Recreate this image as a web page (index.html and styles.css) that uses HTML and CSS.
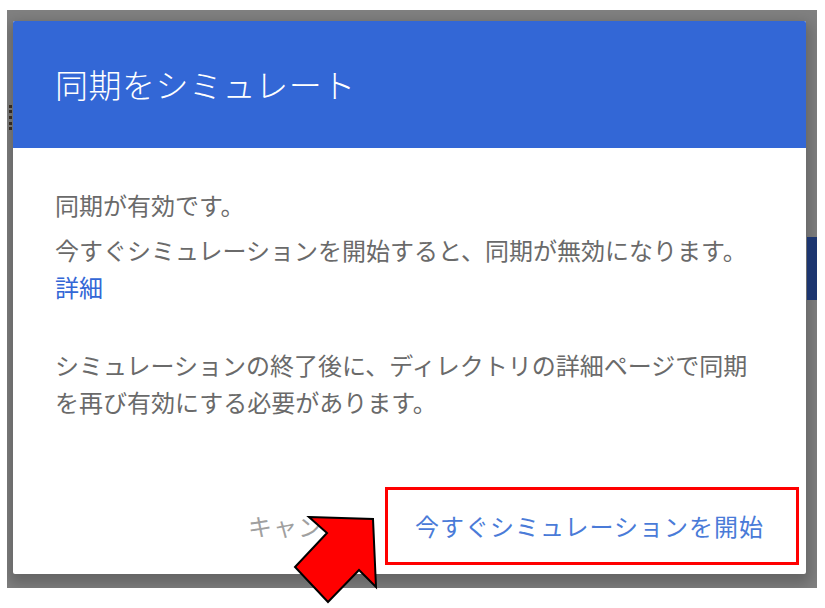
FILE: index.html
```html
<html>
  <head>
    <meta charset="utf-8">
    <title>同期をシミュレート</title>
    <link rel="stylesheet" href="styles.css">
  </head>
<body>

<div class="backdrop">
  <div class="edge edge-left"><span class="peek-text"></span></div>

  <div class="dialog">
    <div class="dialog-header">
      <h2>同期をシミュレート</h2>
    </div>

    <div class="dialog-body">
      <p>同期が有効です。</p>
      <p>今すぐシミュレーションを開始すると、同期が無効になります。<a href="#">詳細</a></p>
      <p class="note">シミュレーションの終了後に、ディレクトリの詳細ページで同期を再び有効にする必要があります。</p>
    </div>

    <div class="dialog-actions">
      <button class="btn btn-cancel">キャンセル</button>
      <div class="highlight">
        <button class="btn btn-primary">今すぐシミュレーションを開始</button>
      </div>
    </div>
  </div>

  <div class="edge edge-right"><span class="peek-button"></span></div>
</div>

<!-- 注目用の矢印 -->
<svg class="pointer" width="92" height="94" viewBox="0 0 92 94">
  <polygon points="19,5 83,7 86,75 69,58 38,90 5,55 37,21" fill="#ff0000" stroke="#000" stroke-width="2" stroke-linejoin="miter"/>
</svg>

</body></html>
```

FILE: styles.css
```css
body {
  margin: 0;
  background: #fff;
  font-family: "Noto Sans CJK JP", "Noto Sans", sans-serif;
  position: relative;
  height: 608px;
  overflow: hidden;
}

.backdrop {
  display: flex;
  width: 810px;
  height: 578px;
  margin: 10px 0 0 7px;
  padding-top: 11px;
  box-sizing: border-box;
  background: #808080;
  overflow: hidden;
}

.edge-left {
  width: 6px;
}

.edge-right {
  width: 11px;
}

.peek-text {
  display: block;
  width: 3px;
  height: 25px;
  margin: 84px 0 0 2px;
  border-left: 3px dotted #3b3026;
}

.peek-button {
  display: block;
  height: 63px;
  margin: 216px 0 0 1px;
  background: #1c356f;
}

.dialog {
  display: flex;
  flex-direction: column;
  width: 793px;
  height: 553px;
  background: #fff;
  border-radius: 2px;
  box-shadow: 0 6px 14px 4px rgba(0, 0, 0, 0.22);
  overflow: hidden;
}

.dialog-header {
  display: flex;
  align-items: center;
  height: 127px;
  padding: 0 42px;
  background: #3367d6;
}

.dialog-header h2 {
  margin: 0;
  font-size: 33px;
  font-weight: 300;
  letter-spacing: 0.5px;
  line-height: 1;
  color: #fff;
}

.dialog-body {
  padding: 38px 42px 0;
  font-size: 24px;
  line-height: 37px;
  color: #6a6a6a;
}

.dialog-body p {
  margin: 0 0 8px;
}

.dialog-body p + p {
  margin-bottom: 41px;
}

.dialog-body p.note {
  margin: 0;
}

.dialog-body a {
  color: #3367d6;
  text-decoration: none;
}

.dialog-actions {
  display: flex;
  justify-content: flex-end;
  align-items: center;
  margin-top: auto;
  padding: 0 7px 9px 0;
}

.btn {
  padding: 0;
  border: none;
  background: none;
  font-family: inherit;
  font-size: 24px;
  letter-spacing: 1px;
  line-height: 36px;
  cursor: pointer;
}

.btn-cancel {
  color: #a0a0a0;
  margin-right: 12px;
}

.btn-primary {
  color: #4a7bd8;
}

.highlight {
  display: flex;
  align-items: center;
  height: 78px;
  padding: 0 32px 0 27px;
  box-sizing: border-box;
  border: 3px solid #ff0000;
}

.pointer {
  position: absolute;
  left: 290px;
  top: 512px;
}
```
